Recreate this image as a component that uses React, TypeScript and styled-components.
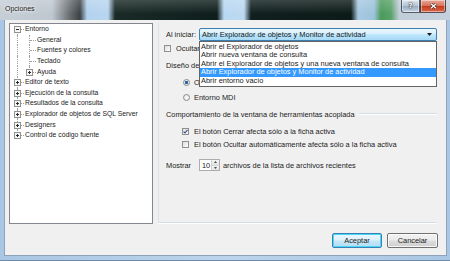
import styled, { createGlobalStyle } from "styled-components";

const GlobalStyle = createGlobalStyle`
  html, body {
    margin: 0;
    padding: 0;
  }
  body {
    width: 450px;
    height: 261px;
    overflow: hidden;
    font-family: "Liberation Sans", Arial, sans-serif;
    font-size: 7.4px;
    color: #1b1b1b;
    background: #b3cde8;
  }
`;

const Window = styled.div`
  width: 450px;
  height: 261px;
  box-sizing: border-box;
  display: flex;
  flex-direction: column;
  background: linear-gradient(to right, #a9c6e4, #bcd4ec 50%, #a9c6e4);
  border-bottom: 1px solid #6e8aa8;
`;

const TitleBar = styled.div`
  height: 20px;
  flex: none;
  display: flex;
  align-items: flex-start;
  padding-left: 5px;
  background:
    linear-gradient(rgba(255, 255, 255, 0.18), rgba(255, 255, 255, 0) 70%),
    linear-gradient(
      to right,
      #c6ced6 0,
      #bfc8d0 52px,
      #686c70 70px,
      #3c4144 80px,
      #b3d2ee 87px,
      #b8d6ef 108px,
      #1a2a26 115px,
      #0e1e1c 217px,
      #b8d8f2 224px,
      #bcd9f0 244px,
      #10201e 251px,
      #0c1a18 351px,
      #a8c8e0 358px,
      #9cc4dc 374px,
      #4c9a5c 381px,
      #5aa268 391px,
      #c0ccd8 399px,
      #c4d0dc 450px
    );
`;

const TitleText = styled.span`
  padding-top: 4px;
  line-height: 10px;
  font-size: 7px;
  color: #1a1a1a;
  text-shadow: 0 0 3px #fff, 0 0 5px rgba(255, 255, 255, 0.9);
`;

const Spacer = styled.div`
  flex: 1;
`;

const CaptionButtons = styled.div`
  display: flex;
  margin-right: 4px;
`;

const CaptionButton = styled.div<{ $close?: boolean }>`
  width: ${(p) => (p.$close ? 26 : 19)}px;
  height: 13px;
  box-sizing: border-box;
  display: flex;
  align-items: center;
  justify-content: center;
  border: 1px solid rgba(40, 50, 60, 0.75);
  border-top: none;
  border-radius: ${(p) => (p.$close ? "0 0 3px 0" : "0 0 0 3px")};
  box-shadow: inset 0 0 0 1px rgba(255, 255, 255, 0.45);
  background: ${(p) =>
    p.$close
      ? "linear-gradient(#e9a898, #d6735d 48%, #c23a1c 52%, #d9684c)"
      : "linear-gradient(#dde5ee, #b7c4d4 48%, #9aacc2 52%, #c6d4e4)"};
  color: #fff;
  font-family: "DejaVu Sans", sans-serif;
  font-weight: bold;
  font-size: 7px;
  text-shadow: 0 0 2px #222, 0 0 1px #000;
`;

const Client = styled.div`
  flex: 1;
  margin: 0 3px 4px 4px;
  border: 1px solid #8ea3ba;
  border-top: none;
  background: #f0f0f0;
  display: flex;
  flex-direction: column;
  padding: 3px 9px 0 4px;
`;

const Body = styled.div`
  display: flex;
  height: 201px;
`;

const Tree = styled.div`
  width: 144px;
  flex: none;
  box-sizing: border-box;
  border: 1px solid #828790;
  background: #fff;
  padding: 0 0 0 2px;
  font-size: 6.8px;
`;

const TreeRow = styled.div`
  display: flex;
  align-items: center;
  height: 10.6px;
  white-space: nowrap;
`;

type LineKind = "full" | "top" | "bottom" | "none";

const Guide = styled.span<{ $line: LineKind; $branch?: boolean }>`
  position: relative;
  width: 12px;
  height: 100%;
  flex: none;
  &::before {
    content: "";
    position: absolute;
    left: 5px;
    top: ${(p) => (p.$line === "bottom" ? "50%" : "0")};
    bottom: ${(p) => (p.$line === "top" ? "50%" : "0")};
    border-left: 1px dotted #a0a0a0;
    display: ${(p) => (p.$line === "none" ? "none" : "block")};
  }
  &::after {
    content: "";
    position: absolute;
    left: 6px;
    right: 0;
    top: 50%;
    border-top: 1px dotted #a0a0a0;
    display: ${(p) => (p.$branch ? "block" : "none")};
  }
`;

const ExpanderBox = styled.svg`
  position: absolute;
  left: 2px;
  top: 50%;
  width: 7px;
  height: 7px;
  margin-top: -3px;
  z-index: 1;
`;

const TreeLabel = styled.span`
  padding-left: 1px;
  line-height: 10px;
`;

const Expander = ({ open }: { open: boolean }) => (
  <ExpanderBox viewBox="0 0 7 7">
    <rect x="0.5" y="0.5" width="6" height="6" fill="#f6f6f6" stroke="#919191" />
    <path d="M2 3.5h3" stroke="#2a2a2a" strokeWidth="1" />
    {!open && <path d="M3.5 2v3" stroke="#2a2a2a" strokeWidth="1" />}
  </ExpanderBox>
);

type Node = {
  label: string;
  guides: { line: LineKind; branch?: boolean; expander?: "open" | "closed" }[];
};

const nodes: Node[] = [
  { label: "Entorno", guides: [{ line: "bottom", branch: true, expander: "open" }] },
  { label: "General", guides: [{ line: "full" }, { line: "full", branch: true }] },
  { label: "Fuentes y colores", guides: [{ line: "full" }, { line: "full", branch: true }] },
  { label: "Teclado", guides: [{ line: "full" }, { line: "full", branch: true }] },
  { label: "Ayuda", guides: [{ line: "full" }, { line: "top", branch: true, expander: "closed" }] },
  { label: "Editor de texto", guides: [{ line: "full", branch: true, expander: "closed" }] },
  { label: "Ejecución de la consulta", guides: [{ line: "full", branch: true, expander: "closed" }] },
  { label: "Resultados de la consulta", guides: [{ line: "full", branch: true, expander: "closed" }] },
  { label: "Explorador de objetos de SQL Server", guides: [{ line: "full", branch: true, expander: "closed" }] },
  { label: "Designers", guides: [{ line: "full", branch: true, expander: "closed" }] },
  { label: "Control de código fuente", guides: [{ line: "top", branch: true, expander: "closed" }] },
];

const Panel = styled.div`
  flex: 1;
  height: 200px;
  margin-left: 5px;
  box-sizing: border-box;
  border-left: 1px solid #dce3e8;
  border-bottom: 1px solid #d5dde3;
  box-shadow: 0 1px 0 #fff;
  padding-left: 7px;
  display: flex;
  flex-direction: column;
`;

const Row = styled.div<{ $top: number; $indent?: number; $height?: number }>`
  display: flex;
  align-items: center;
  height: ${(p) => p.$height ?? 9}px;
  margin-top: ${(p) => p.$top}px;
  margin-left: ${(p) => p.$indent ?? 0}px;
  white-space: nowrap;
`;

const FieldLabel = styled.span`
  width: 33px;
  flex: none;
`;

const ComboWrap = styled.div`
  position: relative;
  flex: 1;
  height: 13px;
`;

const Combo = styled.div`
  height: 13px;
  box-sizing: border-box;
  border: 1px solid #3c7fb1;
  border-radius: 2px;
  background: linear-gradient(#eaf6fd 0%, #d9f0fc 45%, #bee6fd 50%, #a7d9f5 100%);
  display: flex;
  align-items: center;
  padding-left: 2px;
  color: #101820;
`;

const ComboText = styled.span`
  flex: 1;
`;

const ComboArrow = styled.svg`
  width: 5px;
  height: 3px;
  margin-right: 4px;
`;

const List = styled.div`
  position: absolute;
  top: 100%;
  left: 0;
  right: 0;
  z-index: 2;
  box-sizing: border-box;
  border: 1px solid #646464;
  background: #fff;
  padding: 0.5px 0;
`;

const ListItem = styled.div<{ $selected?: boolean }>`
  height: 8.6px;
  line-height: 8.6px;
  padding-left: 1px;
  background: ${(p) => (p.$selected ? "#3399ff" : "transparent")};
  color: ${(p) => (p.$selected ? "#fff" : "#1b1b1b")};
`;

const Check = styled.span`
  position: relative;
  width: 7px;
  height: 7px;
  flex: none;
  box-sizing: border-box;
  border: 1px solid #8f8f8f;
  background: linear-gradient(135deg, #dcdcdc, #ffffff);
  margin-right: 5px;
`;

const CheckMark = styled.svg`
  position: absolute;
  left: 0;
  top: 0;
  width: 5px;
  height: 5px;
`;

const Radio = styled.span<{ $on?: boolean }>`
  width: 7px;
  height: 7px;
  flex: none;
  box-sizing: border-box;
  border-radius: 50%;
  border: 1px solid #8b8b8b;
  background: ${(p) =>
    p.$on
      ? "radial-gradient(circle, #1e4f86 0, #2f74b8 1.4px, #e6e6e6 1.9px, #fafafa 100%)"
      : "radial-gradient(circle at 60% 60%, #ffffff, #d8d8d8)"};
  margin-right: 4px;
`;

const GroupLine = styled.span`
  flex: 1;
  margin-left: 4px;
  border-top: 1px solid #d5dde3;
  border-bottom: 1px solid #fff;
`;

const Spin = styled.div`
  width: 21px;
  height: 12px;
  flex: none;
  box-sizing: border-box;
  border: 1px solid #abadb3;
  background: #fff;
  display: flex;
  align-items: center;
  padding-left: 2px;
  margin-right: 3px;
`;

const SpinValue = styled.span`
  flex: 1;
`;

const SpinButtons = styled.div`
  width: 7px;
  height: 100%;
  display: flex;
  flex-direction: column;
  border-left: 1px solid #cfd3d8;
`;

const SpinHalf = styled.div`
  flex: 1;
  display: flex;
  align-items: center;
  justify-content: center;
  background: linear-gradient(#f6f6f6, #e2e2e2);
  border-bottom: 1px solid #d8d8d8;
  &:last-child {
    border-bottom: none;
  }
`;

const SpinArrow = styled.svg`
  width: 3px;
  height: 2px;
`;

const Footer = styled.div`
  display: flex;
  justify-content: flex-end;
  gap: 5px;
  margin-top: 9px;
  margin-right: -1px;
`;

const Button = styled.div<{ $default?: boolean; $width: number }>`
  width: ${(p) => p.$width}px;
  height: 15px;
  box-sizing: border-box;
  display: flex;
  align-items: center;
  justify-content: center;
  border-radius: 2px;
  border: 1px solid ${(p) => (p.$default ? "#3c7fb1" : "#707070")};
  box-shadow: ${(p) =>
    p.$default ? "inset 0 0 0 1px #48d6fc" : "inset 0 0 0 1px rgba(255,255,255,0.8)"};
  background: ${(p) =>
    p.$default
      ? "linear-gradient(#ebf7fd, #dcf1fb 48%, #c5e7f7 52%, #b4def3)"
      : "linear-gradient(#f2f2f2, #ebebeb 48%, #dddddd 52%, #cfcfcf)"};
  color: #1b1b1b;
`;

const options = [
  "Abrir el Explorador de objetos",
  "Abrir nueva ventana de consulta",
  "Abrir el Explorador de objetos y una nueva ventana de consulta",
  "Abrir Explorador de objetos y Monitor de actividad",
  "Abrir entorno vacío",
];

export default function App() {
  return (
    <>
      <GlobalStyle />
      <Window>
        <TitleBar>
          <TitleText>Opciones</TitleText>
          <Spacer />
          <CaptionButtons>
            <CaptionButton>?</CaptionButton>
            <CaptionButton $close>
              <svg width="7" height="6" viewBox="0 0 7 6">
                <path d="M1 0.8L6 5.2M6 0.8L1 5.2" stroke="#3a1a14" strokeWidth="2.4" />
                <path d="M1 0.8L6 5.2M6 0.8L1 5.2" stroke="#fff" strokeWidth="1.4" />
              </svg>
            </CaptionButton>
          </CaptionButtons>
        </TitleBar>

        <Client>
          <Body>
            <Tree>
              {nodes.map((node) => (
                <TreeRow key={node.label}>
                  {node.guides.map((g, i) => (
                    <Guide key={i} $line={g.line} $branch={g.branch}>
                      {g.expander && <Expander open={g.expander === "open"} />}
                    </Guide>
                  ))}
                  <TreeLabel>{node.label}</TreeLabel>
                </TreeRow>
              ))}
            </Tree>

            <Panel>
              <Row $top={5} $height={13}>
                <FieldLabel>Al iniciar:</FieldLabel>
                <ComboWrap>
                  <Combo>
                    <ComboText>Abrir Explorador de objetos y Monitor de actividad</ComboText>
                    <ComboArrow viewBox="0 0 5 3">
                      <path d="M0 0h5L2.5 3z" fill="#1b1b1b" />
                    </ComboArrow>
                  </Combo>
                  <List>
                    {options.map((o, i) => (
                      <ListItem key={o} $selected={i === 3}>
                        {o}
                      </ListItem>
                    ))}
                  </List>
                </ComboWrap>
              </Row>

              <Row $top={2.5} $indent={-2}>
                <Check />
                Ocultar ventanas del sistema
              </Row>

              <Row $top={8}>Diseño del entorno</Row>

              <Row $top={8} $indent={17}>
                <Radio $on />
                Organización por fichas
              </Row>
              <Row $top={6} $indent={17}>
                <Radio />
                Entorno MDI
              </Row>

              <Row $top={8}>
                Comportamiento de la ventana de herramientas acoplada
                <GroupLine />
              </Row>

              <Row $top={8} $indent={16}>
                <Check>
                  <CheckMark viewBox="0 0 5 5">
                    <path d="M0.6 2.6L2 4L4.5 0.8" fill="none" stroke="#34507c" strokeWidth="1.1" />
                  </CheckMark>
                </Check>
                El botón Cerrar afecta sólo a la ficha activa
              </Row>
              <Row $top={4} $indent={16}>
                <Check />
                El botón Ocultar automáticamente afecta sólo a la ficha activa
              </Row>

              <Row $top={10.5} $height={12}>
                <FieldLabel>Mostrar</FieldLabel>
                <Spin>
                  <SpinValue>10</SpinValue>
                  <SpinButtons>
                    <SpinHalf>
                      <SpinArrow viewBox="0 0 3 2">
                        <path d="M0 2h3L1.5 0z" fill="#4a4a4a" />
                      </SpinArrow>
                    </SpinHalf>
                    <SpinHalf>
                      <SpinArrow viewBox="0 0 3 2">
                        <path d="M0 0h3L1.5 2z" fill="#4a4a4a" />
                      </SpinArrow>
                    </SpinHalf>
                  </SpinButtons>
                </Spin>
                archivos de la lista de archivos recientes
              </Row>
            </Panel>
          </Body>

          <Footer>
            <Button $default $width={50}>
              Aceptar
            </Button>
            <Button $width={51}>Cancelar</Button>
          </Footer>
        </Client>
      </Window>
    </>
  );
}
